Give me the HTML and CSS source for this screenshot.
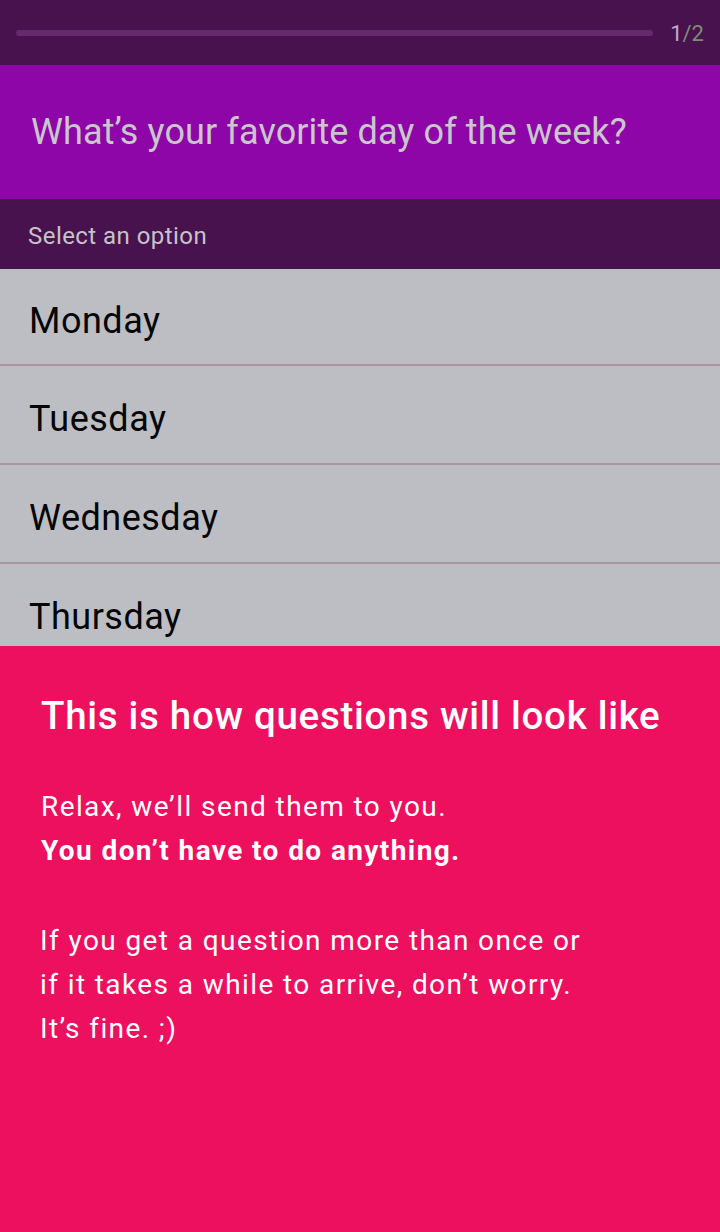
FILE: index.html
```html
<!DOCTYPE html>
<html lang="en">
<head>
  <meta charset="UTF-8">
  <meta name="viewport" content="width=device-width, initial-scale=1.0">
  <title>Question preview</title>
  <link rel="stylesheet" href="styles.css">
</head>
<body>
  <div class="screen">
    <div class="topbar">
      <div class="progress"><div class="progress-fill"></div></div>
      <div class="counter"><span class="current">1</span><span class="total">/2</span></div>
    </div>

    <div class="question">What’s your favorite day of the week?</div>

    <div class="hint">Select an option</div>

    <div class="options">
      <div class="option">Monday</div>
      <div class="option">Tuesday</div>
      <div class="option">Wednesday</div>
      <div class="option">Thursday</div>
      <div class="option">Friday</div>
    </div>

    <div class="sheet">
      <h1>This is how questions will look like</h1>
      <p>Relax, we’ll send them to you.<br><strong>You don’t have to do anything.</strong></p>
      <p class="second">If you get a question more than once or<br>if it takes a while to arrive, don’t worry.<br>It’s fine. ;)</p>
    </div>
  </div>
</body>
</html>
```

FILE: styles.css
```css
html, body {
  margin: 0;
  height: 100%;
}

body {
  font-family: Roboto, "Liberation Sans", Arial, sans-serif;
}

.screen {
  height: 100vh;
  display: flex;
  flex-direction: column;
  overflow: hidden;
}

.topbar {
  height: 65px;
  flex-shrink: 0;
  background: #48124f;
  display: flex;
  align-items: center;
  padding: 0 16px;
  gap: 17px;
}

.progress {
  flex: 1;
  height: 6px;
  border-radius: 3px;
  background: #662a6c;
}

.counter {
  font-size: 22px;
  padding-top: 2px;
}

.counter .current {
  color: #c3acc7;
}

.counter .total {
  color: #7c8d75;
}

.question {
  height: 134px;
  flex-shrink: 0;
  box-sizing: border-box;
  background: #8e06a8;
  color: #c9c7cb;
  font-size: 36px;
  letter-spacing: 0.1px;
  padding: 0 31px;
  display: flex;
  align-items: center;
}

.hint {
  height: 70px;
  flex-shrink: 0;
  box-sizing: border-box;
  background: #48124f;
  color: #c6c3c8;
  font-size: 24px;
  letter-spacing: 0.45px;
  padding: 4px 28px 0;
  display: flex;
  align-items: center;
}

.options {
  flex: 1;
  overflow: hidden;
  background: #bcbec3;
}

.option {
  height: 89px;
  padding: 8px 29px 0;
  border-bottom: 2px solid #a8959f;
  font-size: 36px;
  letter-spacing: 0.5px;
  color: #050505;
  display: flex;
  align-items: center;
}

.option:first-child {
  height: 87px;
}

.sheet {
  height: 586px;
  flex-shrink: 0;
  box-sizing: border-box;
  background: #ec105e;
  color: #ffffff;
  padding: 42px 41px 0;
}

.sheet h1 {
  margin: 0 0 41px;
  font-size: 38.5px;
  font-weight: 500;
  letter-spacing: 0.7px;
  line-height: 56px;
}

.sheet p {
  margin: 0;
  font-size: 28px;
  letter-spacing: 1.4px;
  line-height: 44px;
}

.sheet p strong {
  font-weight: 700;
}

.sheet .second {
  margin-top: 46px;
  margin-left: -1px;
}
```
